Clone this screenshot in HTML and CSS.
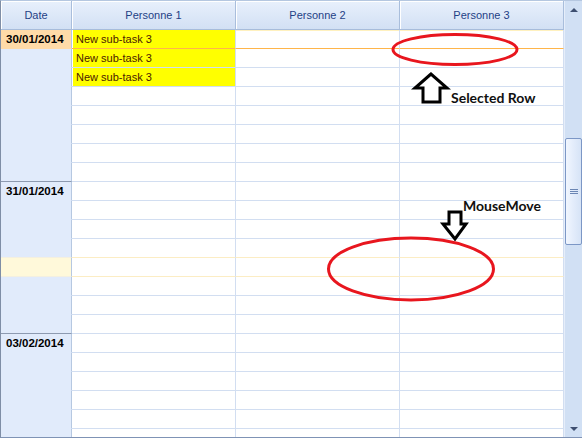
FILE: index.html
```html
<!DOCTYPE html>
<html lang="fr">
<head>
  <meta charset="UTF-8" />
  <title>Planning</title>
  <link rel="stylesheet" href="styles.css">
</head>
<body>

  <div class="scheduler">
    <div class="main">
      <div class="header">
        <div class="head-cell">Date</div>
        <div class="head-cell">Personne 1</div>
        <div class="head-cell">Personne 2</div>
        <div class="head-cell">Personne 3</div>
      </div>

      <div class="rows">
        <!-- 30/01/2014 -->
        <div class="row selected">
          <div class="date-cell">30/01/2014</div>
          <div class="cell task">New sub-task 3</div><div class="cell"></div><div class="cell"></div>
        </div>
        <div class="row">
          <div class="date-cell"></div>
          <div class="cell task">New sub-task 3</div><div class="cell"></div><div class="cell"></div>
        </div>
        <div class="row">
          <div class="date-cell"></div>
          <div class="cell task">New sub-task 3</div><div class="cell"></div><div class="cell"></div>
        </div>
        <div class="row"><div class="date-cell"></div><div class="cell"></div><div class="cell"></div><div class="cell"></div></div>
        <div class="row"><div class="date-cell"></div><div class="cell"></div><div class="cell"></div><div class="cell"></div></div>
        <div class="row"><div class="date-cell"></div><div class="cell"></div><div class="cell"></div><div class="cell"></div></div>
        <div class="row"><div class="date-cell"></div><div class="cell"></div><div class="cell"></div><div class="cell"></div></div>
        <div class="row"><div class="date-cell day-end"></div><div class="cell"></div><div class="cell"></div><div class="cell"></div></div>

        <!-- 31/01/2014 -->
        <div class="row"><div class="date-cell">31/01/2014</div><div class="cell"></div><div class="cell"></div><div class="cell"></div></div>
        <div class="row"><div class="date-cell"></div><div class="cell"></div><div class="cell"></div><div class="cell"></div></div>
        <div class="row"><div class="date-cell"></div><div class="cell"></div><div class="cell"></div><div class="cell"></div></div>
        <div class="row before-hover"><div class="date-cell"></div><div class="cell"></div><div class="cell"></div><div class="cell"></div></div>
        <div class="row hover"><div class="date-cell"></div><div class="cell"></div><div class="cell"></div><div class="cell"></div></div>
        <div class="row"><div class="date-cell"></div><div class="cell"></div><div class="cell"></div><div class="cell"></div></div>
        <div class="row"><div class="date-cell"></div><div class="cell"></div><div class="cell"></div><div class="cell"></div></div>
        <div class="row"><div class="date-cell day-end"></div><div class="cell"></div><div class="cell"></div><div class="cell"></div></div>

        <!-- 03/02/2014 -->
        <div class="row"><div class="date-cell">03/02/2014</div><div class="cell"></div><div class="cell"></div><div class="cell"></div></div>
        <div class="row"><div class="date-cell"></div><div class="cell"></div><div class="cell"></div><div class="cell"></div></div>
        <div class="row"><div class="date-cell"></div><div class="cell"></div><div class="cell"></div><div class="cell"></div></div>
        <div class="row"><div class="date-cell"></div><div class="cell"></div><div class="cell"></div><div class="cell"></div></div>
        <div class="row"><div class="date-cell"></div><div class="cell"></div><div class="cell"></div><div class="cell"></div></div>
        <div class="row"><div class="date-cell"></div><div class="cell"></div><div class="cell"></div><div class="cell"></div></div>
        <div class="row"><div class="date-cell"></div><div class="cell"></div><div class="cell"></div><div class="cell"></div></div>
        <div class="row"><div class="date-cell day-end"></div><div class="cell"></div><div class="cell"></div><div class="cell"></div></div>
      </div>
    </div>

    <div class="scrollbar">
      <div class="scroll-btn"><span class="arrow-up"></span></div>
      <div class="track">
        <div class="thumb"><span class="grip"></span></div>
      </div>
      <div class="scroll-btn"><span class="arrow-down"></span></div>
    </div>

    <!-- annotations drawn over the grid -->
    <svg class="notes" width="582" height="438" viewBox="0 0 582 438">
      <ellipse cx="455" cy="49.5" rx="62" ry="15" />
      <path class="arrow" d="M431,74 L415,88 L423,88 L423,102 L440,102 L440,88 L447,88 Z" />
      <text x="451" y="103">Selected Row</text>

      <text x="463" y="211">MouseMove</text>
      <path class="arrow" d="M449,212 L461,212 L461,224 L466,224 L455,239 L443,224 L449,224 Z" />
      <ellipse cx="411" cy="269" rx="82.5" ry="31" />
    </svg>
  </div>

</body>
</html>
```

FILE: styles.css
```css
body {
  margin: 0;
  font-family: 'Liberation Sans', Arial, sans-serif;
  font-size: 11px;
  background-color: #ffffff;
}

.scheduler {
  position: relative;
  display: flex;
  width: 582px;
  height: 438px;
  box-sizing: border-box;
  border-left: 1px solid #7f8ea6;
  border-bottom: 1px solid #7f93b5;
  border-top: 1px solid #b5c7e0;
  overflow: hidden;
}

.main {
  width: 563px;
  display: flex;
  flex-direction: column;
  overflow: hidden;
}

.header {
  display: grid;
  grid-template-columns: 71px 164px 164px 164px;
  height: 29px;
  flex-shrink: 0;
  border-bottom: 1px solid #a7bcdb;
  box-sizing: border-box;
}

.head-cell {
  display: flex;
  align-items: center;
  justify-content: center;
  color: #1f3f86;
  background: linear-gradient(#e8f0fc, #d2e0f4);
  border-right: 1px solid #a9bedc;
  box-shadow: inset 1px 1px #ffffff;
}

.rows {
  flex: 1;
  overflow: hidden;
}

.row {
  display: grid;
  grid-template-columns: 71px 164px 164px 164px;
  height: 19px;
}

.date-cell {
  box-sizing: border-box;
  padding-left: 5px;
  font-size: 11.5px;
  font-weight: bold;
  line-height: 18px;
  color: #000000;
  background-color: #e1ebfb;
  border-right: 1px solid #b6c8e1;
  border-bottom: 1px solid #e1ebfb;
}

.date-cell.day-end {
  border-bottom-color: #8d9ab0;
}

.cell {
  box-sizing: border-box;
  padding: 0 4px;
  line-height: 18px;
  border-right: 1px solid #d2def1;
  border-bottom: 1px solid #d2def1;
}

.cell.task {
  background-color: #ffff00;
  color: #4a1a00;
  box-shadow: inset 1px 0 #ffffff;
}

.row.selected .cell {
  border-bottom-color: #ffb54a;
}

.row.selected .cell:not(.task) {
  box-shadow: inset 0 1px #fff1bf;
}

.row.selected .date-cell {
  background-color: #ffdba8;
  border-bottom-color: #ffdba8;
}

.row.before-hover .cell,
.row.hover .cell {
  border-bottom-color: #fcedc4;
}

.row.before-hover .date-cell {
  border-bottom-color: #f4f0e0;
}

.row.hover .date-cell {
  background-color: #fff9da;
  border-bottom-color: #f4f0e0;
}

/* scrollbar */

.scrollbar {
  width: 18px;
  display: flex;
  flex-direction: column;
  background-color: #d1e0f4;
  border-left: 1px solid #e6eefa;
  box-sizing: border-box;
}

.scroll-btn {
  height: 17px;
  display: flex;
  align-items: center;
  justify-content: center;
}

.arrow-up {
  border-left: 4px solid transparent;
  border-right: 4px solid transparent;
  border-bottom: 4px solid #3e4f70;
}

.arrow-down {
  border-left: 4px solid transparent;
  border-right: 4px solid transparent;
  border-top: 4px solid #3e4f70;
}

.track {
  flex: 1;
}

.thumb {
  margin: 120px 0 0 0;
  height: 107px;
  box-sizing: border-box;
  border: 1px solid #7c97c6;
  border-radius: 2px;
  background: linear-gradient(90deg, #f1f6fe 0%, #e4edfb 45%, #d6e3f6 100%);
  display: flex;
  align-items: center;
  justify-content: center;
}

.grip {
  width: 8px;
  height: 5px;
  background: repeating-linear-gradient(#6b86b4 0 1px, transparent 1px 2px);
}

/* annotations */

.notes {
  position: absolute;
  top: -1px;
  left: -1px;
  pointer-events: none;
}

.notes ellipse {
  fill: none;
  stroke: #e8161e;
  stroke-width: 3;
}

.notes .arrow {
  fill: #ffffff;
  stroke: #000000;
  stroke-width: 3;
  stroke-linejoin: miter;
}

.notes text {
  font-family: Lato, 'Open Sans', sans-serif;
  font-weight: bold;
  font-size: 14px;
  fill: #101010;
}
```
